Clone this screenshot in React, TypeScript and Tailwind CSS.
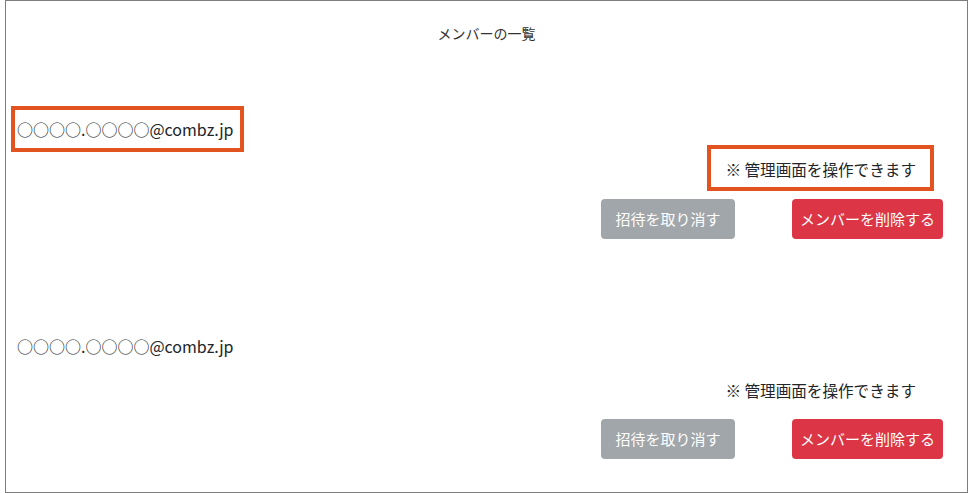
import React from 'react'

const font = { fontFamily: '"Noto Sans CJK JP", "Noto Sans", sans-serif' }

function MemberRow({ email, highlight, first }: { email: string; highlight: boolean; first: boolean }) {
  return (
    <div className={first ? 'mt-[73px]' : 'mt-[95px]'}>
      {/* email */}
      <div className="pl-[11px] h-[24px] flex items-center">
        <span className="relative inline-block text-[16px] leading-[24px] text-[#212529]">
          {email}
          {highlight && (
            <span className="absolute left-[-6px] top-[-11px] w-[233px] h-[46px] border-4 border-[#e2531f]" />
          )}
        </span>
      </div>

      {/* note */}
      <div className={`flex justify-end pr-[51px] ${first ? 'mt-[17px]' : 'mt-[21px]'}`}>
        <span className="relative inline-block text-[15.6px] leading-[22px] text-[#212529]">
          ※ 管理画面を操作できます
          {highlight && (
            <span className="absolute right-[-18px] top-[-13px] w-[227px] h-[46px] border-4 border-[#e2531f]" />
          )}
        </span>
      </div>

      {/* actions */}
      <div className={`flex justify-end gap-[57px] pr-[24px] ${first ? 'mt-[19px]' : 'mt-[18px]'}`}>
        <button className="w-[134px] h-[40px] rounded-[4px] bg-[#a1a6ab] text-white text-[15px] leading-[40px]">
          招待を取り消す
        </button>
        <button className="w-[151px] h-[40px] rounded-[4px] bg-[#dc3545] text-white text-[15px] leading-[40px]">
          メンバーを削除する
        </button>
      </div>
    </div>
  )
}

export default function App() {
  return (
    <div className="w-[969px] h-[493px] bg-white" style={font}>
      <div className="ml-[5px] w-[963px] h-[493px] border border-[#7d7d7d] overflow-hidden">
        <div className="pt-[21px] text-center text-[14px] leading-[22px] text-[#333]">メンバーの一覧</div>

        <MemberRow email="○○○○.○○○○@combz.jp" highlight first />
        <MemberRow email="○○○○.○○○○@combz.jp" highlight={false} first={false} />
      </div>
    </div>
  )
}
